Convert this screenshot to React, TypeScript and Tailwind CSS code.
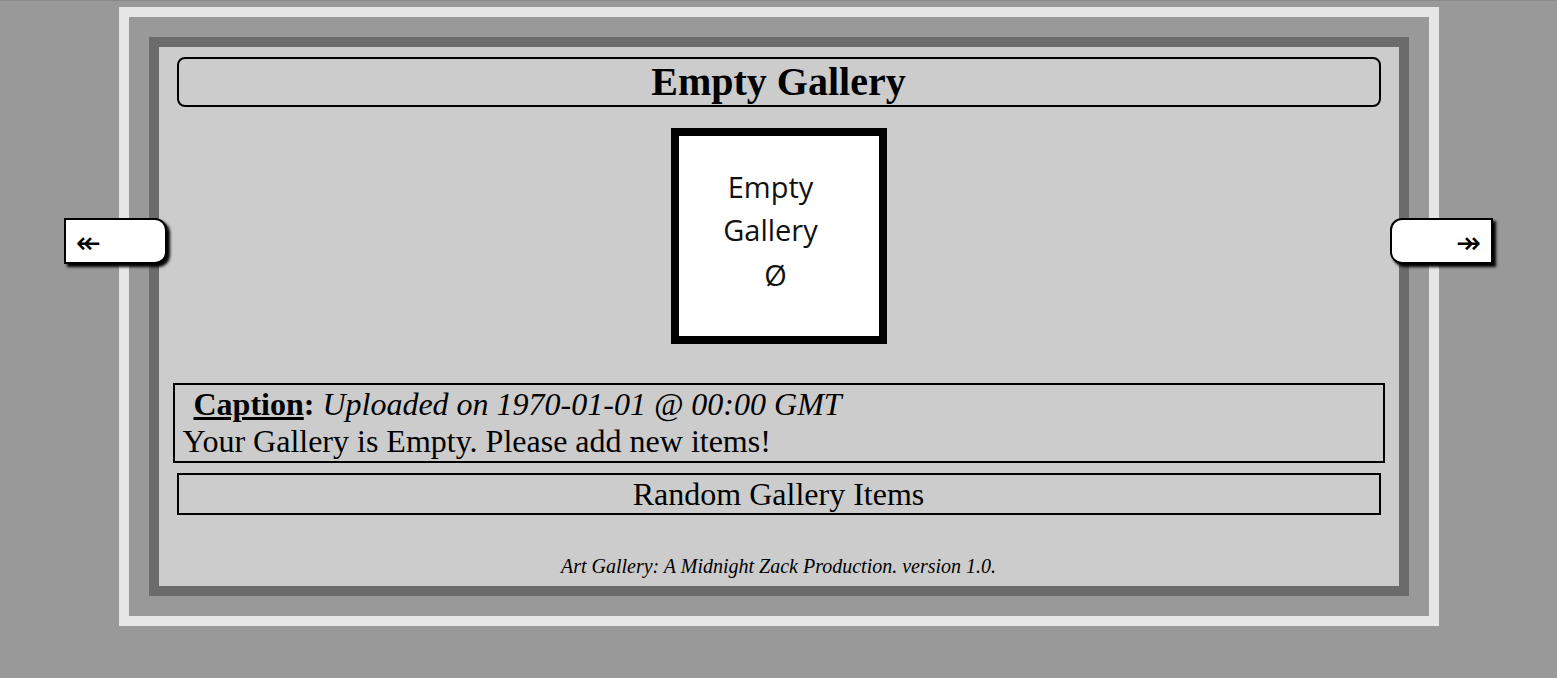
import React from 'react';

const serif = { fontFamily: '"Liberation Serif", "Times New Roman", serif' };

function NavButton({ dir }: { dir: 'prev' | 'next' }) {
  const isPrev = dir === 'prev';
  return (
    <button
      className={[
        'absolute top-[217px] w-[103px] h-[46px] flex items-center bg-white border-2 border-black shadow-[3px_3px_3px_#000] text-black text-[30px] leading-none',
        isPrev ? 'left-[64px] rounded-r-[12px] justify-start pl-[10px]' : 'right-[64px] rounded-l-[12px] justify-end pr-[10px]',
      ].join(' ')}
      style={{ fontFamily: '"DejaVu Sans", sans-serif' }}
    >
      <span className="pt-[4px]">{isPrev ? '↞' : '↠'}</span>
    </button>
  );
}

export default function App() {
  return (
    <div className="relative min-h-screen bg-[#999999] border-t border-[#8a8a8a] overflow-hidden" style={serif}>
      {/* Frame */}
      <div className="mx-auto mt-[6px] w-[1320px] border-[10px] border-[#e6e6e6] p-[20px]">
        <div className="border-[10px] border-[#6b6b6b] bg-[#cccccc] flex flex-col pt-[10px] pb-[8px] text-black">
          {/* Title */}
          <div className="mx-[18px] h-[50px] border-2 border-black rounded-[8px] flex items-center justify-center">
            <h1 className="text-[40px] font-bold leading-none">Empty Gallery</h1>
          </div>

          {/* Image placeholder */}
          <div className="mt-[21px] mx-auto w-[216px] h-[216px] border-8 border-black bg-white">
            <div
              className="flex flex-col items-center pt-[29px] pr-[16px] text-[29px] leading-[43px] text-[#111]"
              style={{ fontFamily: '"Open Sans", sans-serif' }}
            >
              <span>Empty</span>
              <span>Gallery</span>
              <span className="pl-[10px] pt-[2px]">Ø</span>
            </div>
          </div>

          {/* Caption */}
          <div className="mt-[39px] mx-[14px] border-2 border-black px-[8px] py-[1px] text-[32px] leading-[37px]">
            <div>
              <span className="pl-[3px]">{'\u00a0'}</span>
              <b className="underline">Caption</b>
              <b>:</b> <i>Uploaded on 1970-01-01 @ 00:00 GMT</i>
            </div>
            <div>Your Gallery is Empty. Please add new items!</div>
          </div>

          {/* Random items */}
          <div className="mt-[10px] mx-[18px] border-2 border-black text-center text-[32px] leading-[38px]">
            Random Gallery Items
          </div>

          {/* Footer */}
          <p className="mt-[40px] text-center italic text-[20px] leading-[23px]">
            Art Gallery: A Midnight Zack Production. version 1.0.
          </p>
        </div>
      </div>

      <NavButton dir="prev" />
      <NavButton dir="next" />
    </div>
  );
}
